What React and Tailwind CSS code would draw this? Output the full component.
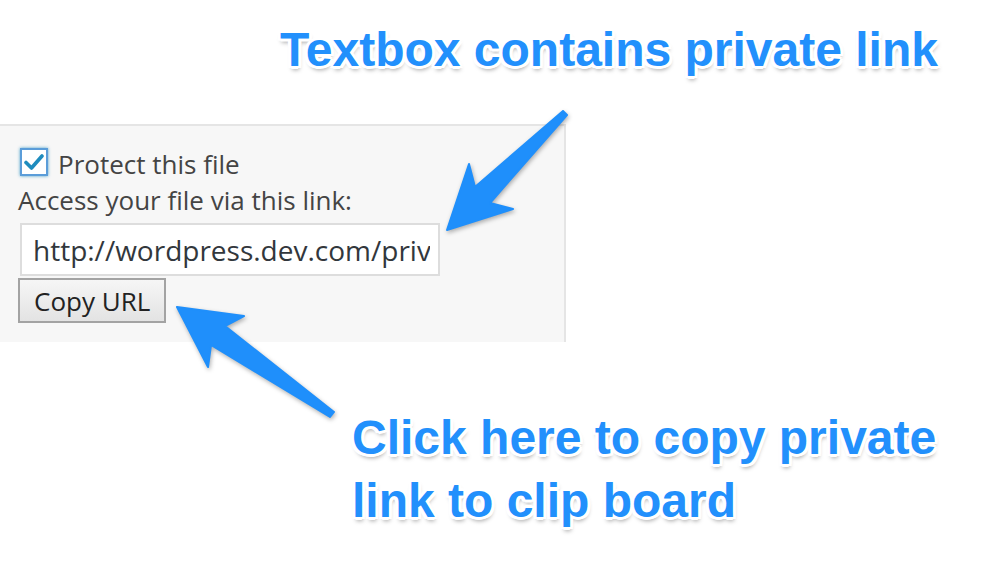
const outline =
  '[text-shadow:3px_0_0_#fff,-3px_0_0_#fff,0_3px_0_#fff,0_-3px_0_#fff,2px_2px_0_#fff,-2px_2px_0_#fff,2px_-2px_0_#fff,-2px_-2px_0_#fff,3px_2px_0_#fff,-3px_2px_0_#fff,1px_4px_4px_rgba(0,0,0,0.35)]'

function Arrows() {
  return (
    <svg
      className="absolute inset-0 pointer-events-none [filter:drop-shadow(1px_2px_2px_rgba(0,0,0,0.3))]"
      width="998"
      height="582"
      viewBox="0 0 998 582"
    >
      {/* points at the textbox */}
      <polygon
        points="447,230 469,164 475,187 563,111 567,115 490,203 513,209"
        fill="#1f8ffb"
        stroke="#1f8ffb"
        strokeWidth="2"
        strokeLinejoin="round"
      />
      {/* points at the button */}
      <polygon
        points="177,307 244,316 225,326 334,412 330,417 211,345 208,367"
        fill="#1f8ffb"
        stroke="#1f8ffb"
        strokeWidth="2"
        strokeLinejoin="round"
      />
    </svg>
  )
}

export default function App() {
  return (
    <div className="relative w-[998px] h-[582px] overflow-hidden bg-white">
      <div className="mt-[124px] w-[566px] h-[218px] bg-[#f7f7f7] border-t-2 border-r-2 border-[#e5e5e5] pl-[18px] pt-[20px] font-['Open_Sans',sans-serif] text-[26px] leading-[36px] text-[#444]">
        <label className="flex items-center">
          <span className="ml-[2px] mb-[4px] flex items-center justify-center w-[28px] h-[28px] bg-white border-2 border-[#5b9dd9] shadow-[0_0_3px_rgba(30,140,190,0.8)]">
            <svg width="20" height="18" viewBox="0 0 20 18">
              <path d="M2 9.5 L7.5 15 L18 3" fill="none" stroke="#1e8cbe" strokeWidth="3.6" strokeLinecap="round" strokeLinejoin="round" />
            </svg>
          </span>
          <span className="ml-[10px]">Protect this file</span>
        </label>
        <div>Access your file via this link:</div>
        <input
          readOnly
          value="http://wordpress.dev.com/private/8f2c1e4a"
          className="block mt-[5px] ml-[2px] w-[420px] h-[53px] bg-white border-2 border-[#dddddd] pl-[11px] pr-[8px] text-[28px] text-[#32373c] outline-none font-['Open_Sans',sans-serif]"
        />
        <button className="block mt-[2px] w-[148px] h-[45px] border-2 border-[#a3a3a3] bg-gradient-to-b from-[#f6f6f6] to-[#e3e3e3] pl-[14px] text-left text-[26px] text-[#222] font-['Open_Sans',sans-serif] leading-none">
          Copy URL
        </button>
      </div>

      <div className={`absolute left-[280px] top-[26px] font-['Liberation_Sans',Arial,sans-serif] font-bold text-[48px] leading-[48px] text-[#2290fc] whitespace-nowrap ${outline}`}>
        Textbox contains private link
      </div>
      <div className={`absolute left-[352px] top-[406px] font-['Liberation_Sans',Arial,sans-serif] font-bold text-[48px] leading-[63px] text-[#2290fc] whitespace-nowrap ${outline}`}>
        <div>Click here to copy private</div>
        <div>link to clip board</div>
      </div>

      <Arrows />
    </div>
  )
}
